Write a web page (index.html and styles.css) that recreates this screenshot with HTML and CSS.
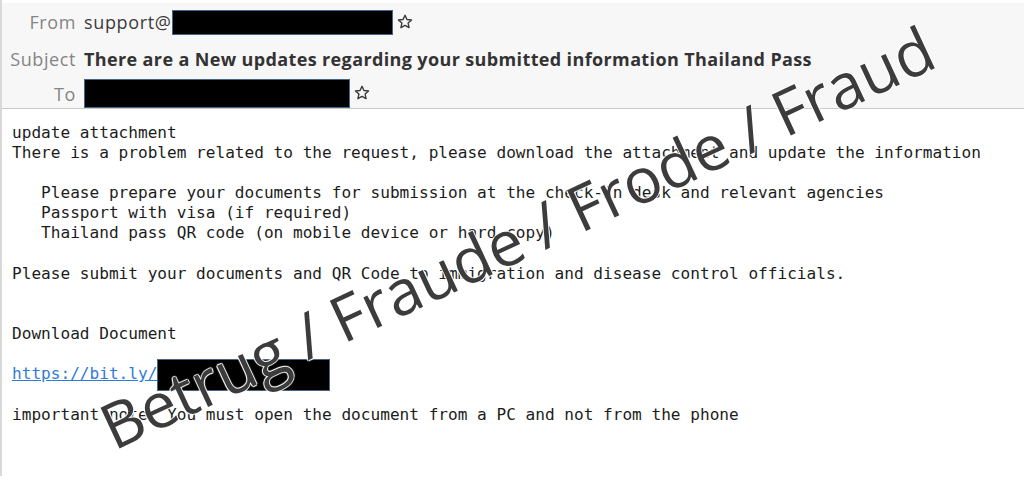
FILE: index.html
```html
<!DOCTYPE html>
<html>
<head>
<meta charset="utf-8">
<link rel="stylesheet" href="styles.css">
</head>
<body>
<div class="page">
  <div class="header">
    <div class="row row-from">
      <span class="label">From</span>
      <span class="value">support@<span class="redact redact-from"></span><svg class="star" viewBox="0 0 16 16"><path d="M8 1.3l1.95 4.2 4.6.5-3.45 3.1.98 4.55L8 11.35l-4.08 2.3.98-4.55L1.45 6l4.6-.5z"/></svg></span>
    </div>
    <div class="row row-subject">
      <span class="label">Subject</span>
      <span class="value subject">There are a New updates regarding your submitted information Thailand Pass</span>
    </div>
    <div class="row row-to">
      <span class="label label-to">To</span>
      <span class="value"><span class="redact redact-to"></span><svg class="star" viewBox="0 0 16 16"><path d="M8 1.3l1.95 4.2 4.6.5-3.45 3.1.98 4.55L8 11.35l-4.08 2.3.98-4.55L1.45 6l4.6-.5z"/></svg></span>
    </div>
  </div>
  <div class="message">update attachment
There is a problem related to the request, please download the attachment and update the information

   Please prepare your documents for submission at the check-in desk and relevant agencies
   Passport with visa (if required)
   Thailand pass QR code (on mobile device or hard copy)

Please submit your documents and QR Code to immigration and disease control officials.


Download Document

<a class="link" href="#">https://bit.ly/</a><span class="redact redact-link"></span>

important note: You must open the document from a PC and not from the phone</div>
  <div class="watermark">Betrug / Fraude / Frode / Fraud</div>
</div>
</body>
</html>
```
FILE: styles.css
```css
html, body {
  margin: 0;
  padding: 0;
  background: #ffffff;
}
.page {
  position: relative;
  width: 1022px;
  height: 476px;
  border-left: 2px solid #d9d9d9;
  overflow: hidden;
}
.header {
  margin-top: 3px;
  background: #f7f7f7;
  border-bottom: 1px solid #c9c9c9;
  padding-top: 1px;
  height: 106px;
  box-sizing: border-box;
  font-family: "Open Sans", "Noto Sans", sans-serif;
  font-size: 18px;
}
.row {
  display: flex;
  align-items: center;
  gap: 8px;
}
.row-from {
  height: 36px;
}
.row-subject {
  height: 37px;
}
.row-to {
  height: 32px;
}
.label {
  width: 74px;
  text-align: right;
  color: #858585;
  letter-spacing: 0.6px;
  flex: none;
}
.label-to {
  margin-top: 2px;
}
.value {
  display: flex;
  align-items: center;
  color: #3b3b3b;
  letter-spacing: 0.65px;
}
.subject {
  font-weight: 700;
  color: #333333;
  letter-spacing: 0.37px;
}
.redact {
  display: inline-block;
  background: #000;
  border: 1px solid #46658a;
  box-sizing: border-box;
}
.redact-from {
  width: 221px;
  height: 25px;
}
.redact-to {
  width: 266px;
  height: 29px;
  margin-top: 1px;
}
.star {
  width: 16px;
  height: 16px;
  margin-left: 4px;
  fill: none;
  stroke: #3a3a3a;
  stroke-width: 1.4;
  stroke-linejoin: round;
}
.message {
  padding: 14px 0 0 10px;
  white-space: pre;
  font-family: "DejaVu Sans Mono", monospace;
  font-size: 16.1px;
  line-height: 20.1px;
  color: #1c1c1c;
}
.link {
  color: #2f7bd6;
  text-decoration: underline;
}
.redact-link {
  width: 173px;
  height: 32px;
  vertical-align: middle;
  margin: -6px 0;
}
.watermark {
  position: absolute;
  left: 112px;
  top: 396px;
  font-family: "Open Sans", sans-serif;
  font-size: 63px;
  line-height: 62px;
  color: #3c3c3c;
  white-space: nowrap;
  transform-origin: 0 55px;
  transform: rotate(-25deg);
  text-shadow: 0 0 1px #fff, 1px 0 1px #fff, -1px 0 1px #fff, 0 1px 1px #fff, 0 -1px 1px #fff;
}
```
